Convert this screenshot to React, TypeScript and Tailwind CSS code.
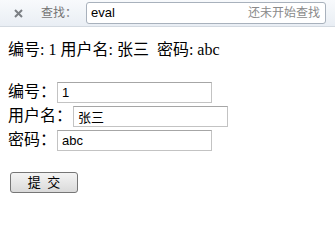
import { useState } from "react";

const cjk = "font-['Liberation_Serif','Noto_Sans_CJK_SC',serif]";
const sans = "font-['Liberation_Sans','Noto_Sans_CJK_SC',sans-serif]";

const Field = ({ label, value }: { label: string; value: string }) => {
  const [v, setV] = useState(value);
  return (
    <div className="flex h-[24px] items-center">
      <span className="text-[16px] leading-[20px] text-black">{label}</span>
      <input
        value={v}
        onChange={(e) => setV(e.target.value)}
        className={`ml-px h-[21px] w-[155px] border border-[#c3c3c3] border-t-[#a6a6a6] bg-white px-[4px] text-[13px] text-black outline-none ${sans}`}
      />
    </div>
  );
};

const App = () => {
  const [query, setQuery] = useState("eval");

  return (
    <div className={`h-[230px] w-[335px] overflow-hidden bg-white ${cjk}`}>
      {/* Find bar */}
      <div className="flex h-[27px] items-center border-b border-[#d3d9e0] bg-gradient-to-b from-[#f8fafc] to-[#e9eef4]">
        <svg className="ml-[14px] h-[9px] w-[9px]" viewBox="0 0 9 9">
          <path d="M1 1L8 8M8 1L1 8" stroke="#7b7f84" strokeWidth="2" />
        </svg>
        <span className={`ml-[18px] text-[12px] text-[#747474] ${sans}`}>查找：</span>
        <div className="ml-[9px] flex h-[22px] w-[240px] items-center rounded-[3px] border border-[#a8b1bc] bg-white pr-[5px] pl-[4px]">
          <input
            value={query}
            onChange={(e) => setQuery(e.target.value)}
            className={`min-w-0 flex-1 text-[13px] text-black outline-none ${sans}`}
          />
          <span className={`text-[12px] text-[#8a8a8a] ${sans}`}>还未开始查找</span>
        </div>
      </div>

      {/* Content */}
      <div className="pl-[8px]">
        <p className="mt-[13px] h-[19px] text-[16px] leading-[19px] text-black whitespace-pre">
          编号: 1 用户名: 张三  密码: abc
        </p>

        <div className="mt-[21px] flex flex-col">
          <Field label="编号：" value="1" />
          <div className="flex h-[24px] items-center">
            <span className="text-[16px] leading-[20px] text-black">用户名：</span>
            <input
              defaultValue="张三"
              className={`ml-px h-[21px] w-[155px] border border-[#c3c3c3] border-t-[#a6a6a6] bg-white px-[4px] text-[13px] text-black outline-none ${sans}`}
            />
          </div>
          <Field label="密码：" value="abc" />
        </div>

        <button
          className={`mt-[20px] ml-[2px] flex h-[21px] w-[68px] items-center justify-center rounded-[3px] border border-[#767676] bg-gradient-to-b from-[#f4f4f4] to-[#dadada] text-[13px] text-black ${cjk}`}
        >
          提&nbsp;&nbsp;交
        </button>
      </div>
    </div>
  );
};

export default App;
